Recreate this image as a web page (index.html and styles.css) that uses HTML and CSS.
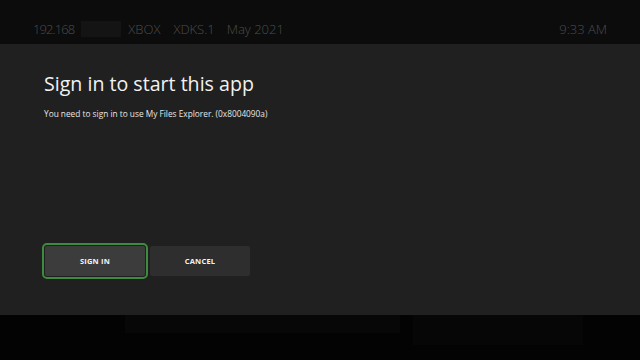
FILE: index.html
```html
<!DOCTYPE html>
<html>
<head>
<meta charset="utf-8">
<link rel="stylesheet" href="styles.css">
</head>
<body>
<div class="screen">
  <header class="topbar">
    <div class="info">
      <span class="ip">192.168</span>
      <span class="redact"></span>
      <span class="xbox">XBOX</span>
      <span class="xdk">XDKS.1</span>
      <span>May 2021</span>
    </div>
    <span class="clock">9:33 AM</span>
  </header>
  <main class="dialog">
    <h1 class="title">Sign in to start this app</h1>
    <p class="message">You need to sign in to use My Files Explorer. (0x8004090a)</p>
    <div class="actions">
      <button class="btn btn-focus">SIGN IN</button>
      <button class="btn">CANCEL</button>
    </div>
  </main>
  <footer class="bottom">
    <span class="ghost ghost-a"></span>
    <span class="ghost ghost-b"></span>
  </footer>
</div>
</body>
</html>
```
FILE: styles.css
```css
* { box-sizing: border-box; }
html, body { margin: 0; padding: 0; background: #030303; }
.screen {
  width: 640px;
  height: 360px;
  display: flex;
  flex-direction: column;
  font-family: "Open Sans", "Noto Sans", sans-serif;
}
.topbar {
  height: 44px;
  background: #0b0c0b;
  display: flex;
  align-items: flex-end;
  justify-content: space-between;
  padding: 0 33px 7px 33px;
  color: #4c4c4c;
  font-weight: 300;
  font-size: 13px;
  line-height: 16px;
}
.info { display: flex; align-items: center; }
.info .ip { letter-spacing: -0.9px; }
.redact {
  width: 40px;
  height: 16px;
  margin: 0 7px 0 7px;
  background: #141414;
}
.xbox { margin-right: 13px; }
.xdk { margin-right: 12px; }
.dialog {
  height: 271px;
  background: #202020;
  padding: 26px 44px 0 44px;
  display: flex;
  flex-direction: column;
}
.title {
  margin: 0;
  font-size: 19.6px;
  font-weight: 400;
  line-height: 28px;
  color: #f2f2f2;
}
.message {
  margin: 10px 0 0 0;
  font-size: 8.3px;
  line-height: 12px;
  color: #e6e6e6;
}
.actions {
  margin-top: 126px;
  display: flex;
  gap: 5px;
  padding-left: 1px;
}
.btn {
  width: 100px;
  height: 30px;
  border: none;
  border-radius: 2px;
  background: #2e2e2e;
  color: #f4f4f4;
  font-family: "Open Sans", "Noto Sans", sans-serif;
  font-weight: 700;
  font-size: 7.5px;
  letter-spacing: 0.2px;
  padding: 0;
}
.btn-focus {
  background: #3c3c3c;
  outline: 2px solid #3e8a3e;
  outline-offset: 1px;
}
.bottom {
  flex: 1;
  background: #030303;
  display: flex;
  align-items: flex-start;
  padding-left: 125px;
  gap: 13px;
}
.ghost { display: block; background: #070707; height: 18px; }
.ghost-a { width: 275px; }
.ghost-b { width: 170px; height: 30px; background: #060606; }
```
